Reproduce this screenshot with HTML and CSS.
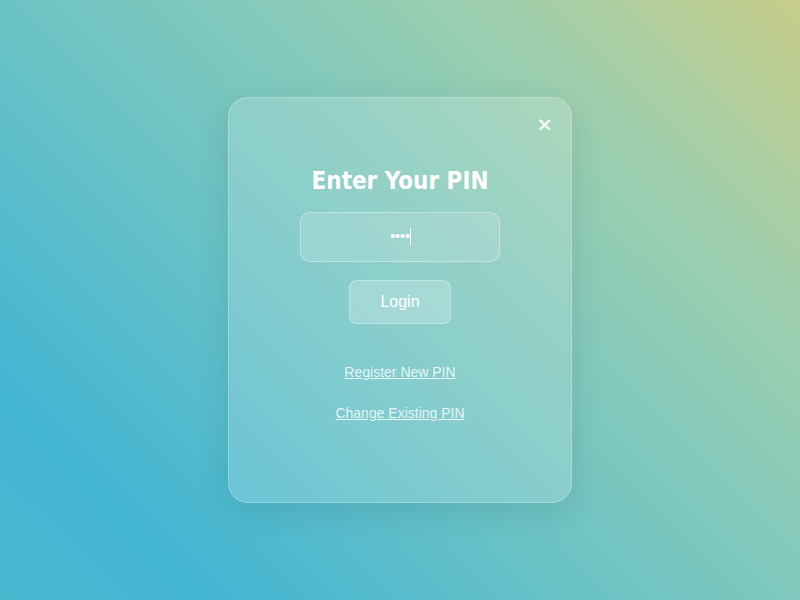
FILE: index.html
```html
<!DOCTYPE html>
<html lang="en">
<head>
<meta charset="utf-8">
<title>Enter Your PIN</title>
<link rel="stylesheet" href="styles.css">
</head>
<body>
  <div class="card">
    <button class="close" aria-label="Close">×</button>
    <h1 class="title">Enter Your PIN</h1>
    <div class="pin-wrap">
      <input class="pin" type="password" value="1234" autofocus>
      <span class="caret"></span>
    </div>
    <button class="login">Login</button>
    <div class="links">
      <a class="link" href="#">Register New PIN</a>
      <a class="link" href="#">Change Existing PIN</a>
    </div>
  </div>
</body>
</html>
```

FILE: styles.css
```css
* { box-sizing: border-box; }
html, body { margin: 0; padding: 0; }
body {
  height: 100vh;
  display: flex;
  align-items: center;
  justify-content: center;
  background: linear-gradient(45deg, #4ab8cf 0%, #42b5d3 15%, #6cc3c5 43%, #80c8bd 57%, #9fcfae 78%, #c6cc88 100%);
  font-family: "Liberation Sans", Arial, sans-serif;
}
.card {
  position: relative;
  width: 344px;
  padding: 69px 0 81px;
  margin-top: -1px;
  display: flex;
  flex-direction: column;
  align-items: center;
  background: rgba(255, 255, 255, 0.16);
  border: 1px solid rgba(255, 255, 255, 0.25);
  border-radius: 20px;
  box-shadow: 0 8px 32px rgba(0, 40, 60, 0.12);
}
.close {
  position: absolute;
  top: 12px;
  right: 18px;
  background: none;
  border: none;
  padding: 0;
  color: rgba(255, 255, 255, 0.85);
  font-family: "DejaVu Sans", sans-serif;
  font-weight: bold;
  font-size: 20px;
  line-height: 28px;
  cursor: pointer;
}
.title {
  margin: 0 0 17px;
  color: #fff;
  font-family: "DejaVu Sans Condensed", "DejaVu Sans", sans-serif;
  font-weight: bold;
  font-size: 24px;
  line-height: 28px;
}
.pin-wrap {
  position: relative;
  width: 200px;
  height: 50px;
}
.pin {
  width: 200px;
  height: 50px;
  border-radius: 10px;
  border: 1px solid rgba(255, 255, 255, 0.35);
  background: rgba(255, 255, 255, 0.14);
  color: #fff;
  caret-color: transparent;
  text-align: center;
  font-family: "Liberation Sans", Arial, sans-serif;
  font-size: 14px;
  outline: none;
  padding: 0 0 2px 0;
}
.caret {
  position: absolute;
  left: 110px;
  top: 16px;
  width: 1px;
  height: 17px;
  background: #fff;
}
.login {
  margin-top: 18px;
  width: 102px;
  height: 44px;
  border-radius: 8px;
  border: 1px solid rgba(255, 255, 255, 0.3);
  background: rgba(255, 255, 255, 0.22);
  color: #fff;
  font-family: "Liberation Sans", Arial, sans-serif;
  font-size: 16px;
  padding: 0;
  cursor: pointer;
}
.links {
  margin-top: 40px;
  display: flex;
  flex-direction: column;
  align-items: center;
  gap: 25px;
}
.link {
  color: rgba(255, 255, 255, 0.82);
  font-size: 14px;
  line-height: 16px;
  text-decoration: underline;
}
```
